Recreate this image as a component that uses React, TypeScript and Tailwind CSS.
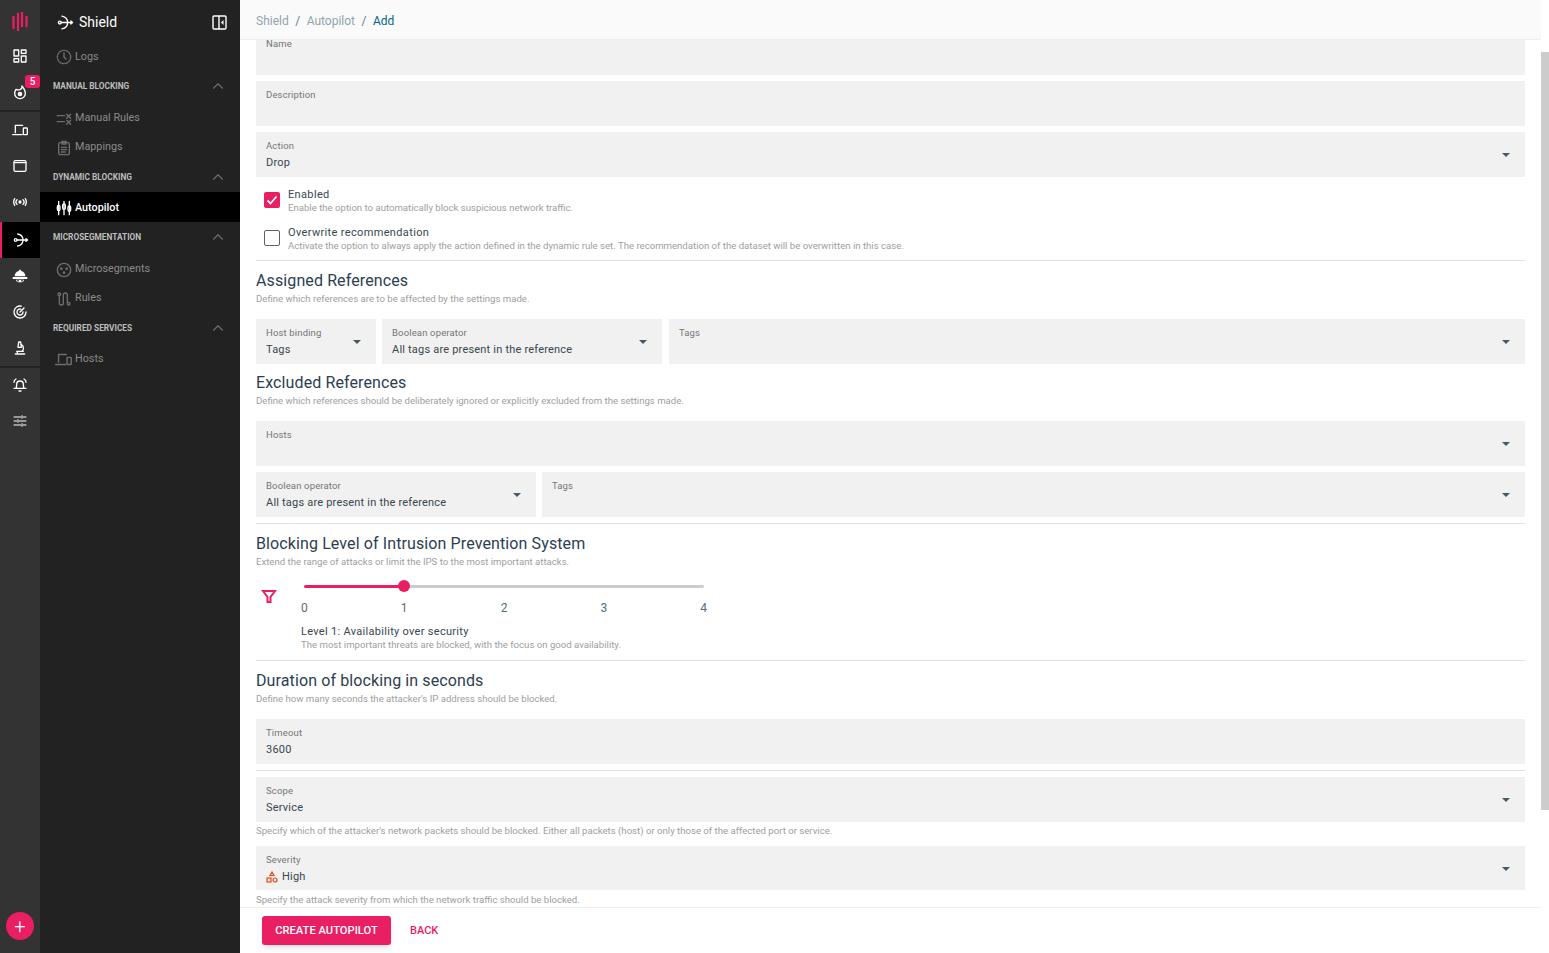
import { ChevronUp } from 'lucide-react';
import type { ReactNode } from 'react';

const Svg = ({ children, size = 16, className = '' }: { children: ReactNode; size?: number; className?: string }) => (
  <svg
    width={size}
    height={size}
    viewBox="0 0 24 24"
    fill="none"
    stroke="currentColor"
    strokeWidth="2"
    strokeLinecap="round"
    strokeLinejoin="round"
    className={className}
  >
    {children}
  </svg>
);

// Shield node: dot, curve and arrow
const ShieldIcon = ({ size = 16 }: { size?: number }) => (
  <Svg size={size}>
    <circle cx="4" cy="12" r="2" />
    <path d="M6 12h16M19.500 10l2.500 2-2.500 2" />
    <path d="M7 3c5 1 8 4.500 8 9s-3 8-8 9" />
  </Svg>
);

const HostsIcon = ({ size = 16 }: { size?: number }) => (
  <Svg size={size}>
    <path d="M16 5H5v11M1 19h14" />
    <rect x="17" y="9" width="6" height="10" rx="1" />
  </Svg>
);

const railTop = [
  <Svg key="dash"><rect x="3" y="3" width="7" height="9" /><rect x="14" y="3" width="7" height="5" /><rect x="14" y="12" width="7" height="9" /><rect x="3" y="16" width="7" height="5" /></Svg>,
  <Svg key="fire"><path d="M6 8c-1 2-2 3.500-2 6a8 8 0 0 0 16 0c0-4-2-7-5-11 0 3-1 5-3 5.500C10 9 8 9 6 8z" /><circle cx="12" cy="15" r="2.500" fill="currentColor" /></Svg>,
];

const railMiddle = [
  <HostsIcon key="hosts" />,
  <Svg key="window"><rect x="3" y="4" width="18" height="16" rx="2" /><path d="M3 7h18" /></Svg>,
  <Svg key="radio"><circle cx="12" cy="12" r="1.500" fill="currentColor" /><path d="M7.500 8.500a5 5 0 0 0 0 7M16.500 8.500a5 5 0 0 1 0 7M4 7a10 10 0 0 0 0 10M20 7a10 10 0 0 1 0 10" /></Svg>,
];

const railAfter = [
  <svg key="dome" width="16" height="16" viewBox="0 0 24 24" fill="currentColor">
    <path d="M12 2l2 2.500c4 1 6 4 6 8H4c0-4 2-7 6-8z" />
    <path d="M1 13.500h22v3H1z" />
    <path d="M6 17.500h12c0 2.500-2 4-6 4s-6-1.500-6-4z" />
    <circle cx="9" cy="19" r="1.300" fill="#333333" />
    <circle cx="15" cy="19" r="1.300" fill="#333333" />
  </svg>,
  <Svg key="radar"><path d="M14 3.200A9 9 0 1 0 21 12" /><path d="M13 7.600A4.500 4.500 0 1 0 16.500 12" /><path d="M12 12l6-6" /></Svg>,
  <Svg key="micro"><path d="M5 21h14M7 17h10M8 21v-4" /><path d="M14 7a6 6 0 0 1 1 10" /><path d="M10 3h3l1 8H9z" /></Svg>,
];

const railBottom = [
  <Svg key="alarm"><path d="M6 17c1-2 1-4 1-6a5 5 0 0 1 10 0c0 2 0 4 1 6zM3 17h18M10.500 21h3M3 8c0-2 1-4 3-5M21 8c0-2-1-4-3-5" /></Svg>,
  <Svg key="tune"><g strokeWidth="1.500"><path d="M3 6h10M17 6h4M15 4v4M3 12h4M11 12h10M9 10v4M3 18h10M17 18h4M15 16v4" /></g></Svg>,
];

const RailItem = ({ icon, active = false, badge }: { icon: ReactNode; active?: boolean; badge?: string }) => (
  <div
    className={`relative h-9 flex items-center justify-center text-white ${
      active ? 'mt-[2px] bg-black border-l-2 border-[#e91e63]' : ''
    }`}
  >
    {icon}
    {badge && (
      <span className="absolute left-[25px] top-[1px] w-[15px] h-[13px] rounded-[3px] bg-[#e91e63] text-[10px] leading-[13px] font-medium text-center">
        {badge}
      </span>
    )}
  </div>
);

const Rail = () => (
  <aside className="w-10 shrink-0 bg-[#333333] flex flex-col">
    <div className="h-[38px] pt-[6px] flex items-center justify-center">
      <svg width="16" height="20" viewBox="0 0 16 20" fill="none" stroke="#e91e63" strokeWidth="2.200">
        <path d="M1.500 4v13M6 1v18M10 0v15M14.500 4v11" />
      </svg>
    </div>
    {railTop.map((icon, i) => (
      <RailItem key={i} icon={icon} badge={i === 1 ? '5' : undefined} />
    ))}
    <div className="h-[2px] bg-[#222222]" />
    {railMiddle.map((icon, i) => (
      <RailItem key={i} icon={icon} />
    ))}
    <RailItem icon={<ShieldIcon />} active />
    {railAfter.map((icon, i) => (
      <RailItem key={i} icon={icon} />
    ))}
    <div className="h-[2px] -mb-px bg-[#222222]" />
    {railBottom.map((icon, i) => (
      <RailItem key={i} icon={icon} />
    ))}
    <div className="mt-auto mb-[13px] mx-auto w-7 h-7 rounded-full bg-[#e91e63] flex items-center justify-center text-white text-xl font-light leading-none">
      +
    </div>
  </aside>
);

const NavSection = ({ title }: { title: string }) => (
  <div className="h-[30px] pl-[13px] pr-[13px] flex items-center justify-between">
    <span className="text-[8.300px] font-bold text-[#bdbdbd]">{title}</span>
    <ChevronUp size={18} strokeWidth={1.500} className="text-[#6e6e6e]" />
  </div>
);

const NavItem = ({ icon, label, active = false, tall = false }: { icon: ReactNode; label: string; active?: boolean; tall?: boolean }) => (
  <div
    className={`pl-[17px] flex items-center gap-[5px] text-[10.800px] ${tall ? 'h-[30px] pt-[2px]' : 'h-[29px]'} ${
      active ? 'bg-black text-white font-medium' : 'text-[#8a8a8a]'
    }`}
  >
    <span className="w-[13px] h-[14px] flex items-center justify-center">{icon}</span>
    {label}
  </div>
);

const Sidebar = () => (
  <nav className="w-[200px] shrink-0 bg-[#222222] flex flex-col">
    <div className="h-[41px] pt-[3px] pl-[17px] pr-[13px] flex items-center justify-between text-white">
      <span className="flex items-center gap-[5px] text-[14px]">
        <ShieldIcon size={17} />
        Shield
      </span>
      <svg width="15" height="15" viewBox="0 0 15 15" fill="none" stroke="currentColor" strokeWidth="1.400">
        <rect x="1" y="1" width="13" height="13" rx="1" />
        <path d="M7 1v13" />
        <path d="M11.500 5v5L9 7.500z" fill="currentColor" stroke="none" />
      </svg>
    </div>
    <NavItem
      tall
      label="Logs"
      icon={<Svg size={16} className="shrink-0 text-[#6e6e6e]"><circle cx="12" cy="12" r="10" strokeDasharray="3 2" /><path d="M12 6v6l3 3" /></Svg>}
    />
    <NavSection title="MANUAL BLOCKING" />
    <div className="pt-[3px]">
      <NavItem
        label="Manual Rules"
        icon={<Svg size={16} className="shrink-0 text-[#6e6e6e]"><path d="M2 7h11M2 16h11M16 5l6 6M22 5l-6 6M16 14l6 6M22 14l-6 6" /></Svg>}
      />
      <NavItem
        label="Mappings"
        icon={<Svg size={16} className="shrink-0 text-[#6e6e6e]"><rect x="4" y="4" width="16" height="18" rx="2" /><path d="M9 2h6v4H9zM8 11h8M8 14.500h8M8 18h6" /></Svg>}
      />
    </div>
    <NavSection title="DYNAMIC BLOCKING" />
    <NavItem
      tall
      active
      label="Autopilot"
      icon={<Svg size={16} className="shrink-0"><path d="M4 2v20M12 2v20M20 2v20" /><rect x="2" y="8" width="4" height="8" rx="2" /><rect x="10" y="6" width="4" height="8" rx="2" /><rect x="18" y="9" width="4" height="8" rx="2" /></Svg>}
    />
    <NavSection title="MICROSEGMENTATION" />
    <div className="pt-[3px]">
      <NavItem
        label="Microsegments"
        icon={<Svg size={16} className="shrink-0 text-[#6e6e6e]"><circle cx="12" cy="12" r="10" /><circle cx="8" cy="10" r="1" /><circle cx="16" cy="10" r="1" /><circle cx="12" cy="16" r="1" /></Svg>}
      />
      <NavItem
        label="Rules"
        icon={<Svg size={16} className="shrink-0 text-[#6e6e6e]"><circle cx="5" cy="5" r="2" /><circle cx="19" cy="19" r="2" /><path d="M5 7v11a3 3 0 0 0 6 0V6a3 3 0 0 1 6 0v11" /></Svg>}
      />
    </div>
    <NavSection title="REQUIRED SERVICES" />
    <NavItem tall label="Hosts" icon={<span className="shrink-0 text-[#6e6e6e]"><HostsIcon size={17} /></span>} />
  </nav>
);

const Caret = () => (
  <span className="absolute right-[15px] top-[21px] w-0 h-0 border-x-[4px] border-x-transparent border-t-[4px] border-t-[#455a64]" />
);

const Field = ({
  label,
  value,
  select = false,
  className = '',
  icon,
}: {
  label: string;
  value?: string;
  select?: boolean;
  className?: string;
  icon?: ReactNode;
}) => (
  <div className={`relative px-[10px] pt-[8px] bg-[#f1f1f1] ${className}`}>
    <div className="text-[9.500px] leading-[12px] tracking-[0.15px] text-[#757575]">{label}</div>
    {value && (
      <div className="mt-[4px] flex items-center gap-[4px] text-[11px] leading-[14px] tracking-[0.2px] text-[#37474f]">
        {icon}
        {value}
      </div>
    )}
    {select && <Caret />}
  </div>
);

const Hint = ({ children, className = '' }: { children: ReactNode; className?: string }) => (
  <p className={`text-[9.600px] leading-[12px] text-[#9e9e9e] ${className}`}>{children}</p>
);

const Divider = ({ className = '' }: { className?: string }) => <hr className={`border-t border-[#e0e0e0] ${className}`} />;

const Heading = ({ title, hint }: { title: string; hint: string }) => (
  <div>
    <h2 className="text-[16px] leading-[20px] tracking-[0.11px] text-[#2c3e50]">{title}</h2>
    <Hint className="mt-[2px]">{hint}</Hint>
  </div>
);

const Check = ({ checked, title, hint }: { checked: boolean; title: string; hint: string }) => (
  <div className="flex items-start gap-2 pl-2">
    <span
      className={`mt-[4px] w-4 h-4 rounded-[2px] flex items-center justify-center shrink-0 ${
        checked ? 'bg-[#e91e63]' : 'border border-[#616161]'
      }`}
    >
      {checked && (
        <svg width="12" height="12" viewBox="0 0 12 12" fill="none" stroke="white" strokeWidth="1.800">
          <path d="M1.500 6.500l3 3 6-7" />
        </svg>
      )}
    </span>
    <div>
      <div className="text-[11px] leading-[13px] tracking-[0.35px] text-[#37474f]">{title}</div>
      <Hint className="mt-[1px]">{hint}</Hint>
    </div>
  </div>
);

const Slider = () => (
  <div className="flex pl-[5px] mt-[11px]">
    <svg width="16" height="16" viewBox="0 0 16 16" fill="none" stroke="#e91e63" strokeWidth="2" className="mt-[9px] shrink-0">
      <path d="M2 3h12L9.500 9v5h-3V9z" />
    </svg>
    <div className="ml-[24px]">
      <div className="relative ml-[3px] w-[400px] h-[14px] flex items-center">
        <div className="w-[100px] h-[3px] rounded-l bg-[#e91e63]" />
        <div className="w-[300px] h-[3px] rounded-r bg-[#cccccc]" />
        <div className="absolute left-[94px] top-[1px] w-3 h-3 rounded-full bg-[#e91e63]" />
      </div>
      <div className="mt-[8px] w-[406px] flex justify-between text-[12px] leading-[14px] text-[#546e7a]">
        {['0', '1', '2', '3', '4'].map((n) => (
          <span key={n}>{n}</span>
        ))}
      </div>
      <div className="mt-[10px] text-[11px] leading-[14px] tracking-[0.3px] text-[#37474f]">Level 1: Availability over security</div>
      <Hint>The most important threats are blocked, with the focus on good availability.</Hint>
    </div>
  </div>
);

const HighIcon = () => (
  <svg width="12" height="12" viewBox="0 0 12 12" fill="none" stroke="#e64a19" strokeWidth="1.200">
    <path d="M6 1l2 3.500H4z" />
    <rect x="1" y="7" width="4" height="4" />
    <circle cx="9" cy="9" r="2" />
  </svg>
);

const Form = () => (
  <main className="flex-1 min-h-0 px-4 bg-white">
    <div className="h-[35px] bg-[#f1f1f1] px-[10px]">
      <div className="text-[9.500px] leading-[8px] tracking-[0.15px] text-[#757575]">Name</div>
    </div>
    <Field label="Description" className="mt-[6px] h-[45px]" />
    <Field label="Action" value="Drop" select className="mt-[6px] h-[45px]" />
    <div className="mt-[11px]">
      <Check checked title="Enabled" hint="Enable the option to automatically block suspicious network traffic." />
    </div>
    <div className="mt-[12px]">
      <Check
        checked={false}
        title="Overwrite recommendation"
        hint="Activate the option to always apply the action defined in the dynamic rule set. The recommendation of the dataset will be overwritten in this case."
      />
    </div>
    <Divider className="mt-[8px]" />
    <div className="mt-[10px]">
      <Heading title="Assigned References" hint="Define which references are to be affected by the settings made." />
    </div>
    <div className="mt-[14px] flex gap-[6px]">
      <Field label="Host binding" value="Tags" select className="w-[120px] h-[45px]" />
      <Field label="Boolean operator" value="All tags are present in the reference" select className="w-[280px] h-[45px]" />
      <Field label="Tags" select className="flex-1 ml-px h-[45px]" />
    </div>
    <div className="mt-[9px]">
      <Heading
        title="Excluded References"
        hint="Define which references should be deliberately ignored or explicitly excluded from the settings made."
      />
    </div>
    <Field label="Hosts" select className="mt-[14px] h-[45px]" />
    <div className="mt-[6px] flex gap-[6px]">
      <Field label="Boolean operator" value="All tags are present in the reference" select className="w-[280px] h-[45px]" />
      <Field label="Tags" select className="flex-1 h-[45px]" />
    </div>
    <Divider className="mt-[6px]" />
    <div className="mt-[10px]">
      <Heading
        title="Blocking Level of Intrusion Prevention System"
        hint="Extend the range of attacks or limit the IPS to the most important attacks."
      />
    </div>
    <Slider />
    <Divider className="mt-[9px]" />
    <div className="mt-[10px]">
      <Heading title="Duration of blocking in seconds" hint="Define how many seconds the attacker's IP address should be blocked." />
    </div>
    <Field label="Timeout" value="3600" className="mt-[14px] h-[45px]" />
    <Divider className="mt-[6px]" />
    <Field label="Scope" value="Service" select className="mt-[6px] h-[45px]" />
    <Hint className="mt-[3px]">
      Specify which of the attacker's network packets should be blocked. Either all packets (host) or only those of the affected port or service.
    </Hint>
    <Field label="Severity" value="High" select icon={<HighIcon />} className="mt-[9px] h-[44px]" />
    <Hint className="mt-[4px]">Specify the attack severity from which the network traffic should be blocked.</Hint>
  </main>
);

export default function App() {
  return (
    <div className="h-[953px] flex overflow-hidden bg-white" style={{ fontFamily: 'Roboto, sans-serif' }}>
      <Rail />
      <Sidebar />
      <div className="flex-1 min-w-0 flex flex-col">
        <header className="h-10 shrink-0 pl-4 pt-[3px] flex items-center gap-[6.500px] bg-[#fafafa] border-b border-[#eeeeee] text-[12px] text-[#90a4ae]">
          <span>Shield</span>
          <span className="text-[#607d8b]">/</span>
          <span>Autopilot</span>
          <span className="text-[#607d8b]">/</span>
          <span className="text-[#01668b]">Add</span>
        </header>
        <Form />
        <footer className="h-[46px] shrink-0 pl-[22px] flex items-center gap-[19px] bg-white border-t border-[#eeeeee]">
          <button className="h-[29px] w-[129px] pt-px rounded-[3px] bg-[#e91e63] text-white text-[11.200px] font-medium shadow-md">CREATE AUTOPILOT</button>
          <button className="pt-[2px] text-[#e91e63] text-[11px] font-medium">BACK</button>
        </footer>
      </div>
      <div className="w-2 shrink-0 bg-white">
        <div className="mt-[52px] h-[758px] bg-[#cccccc]" />
      </div>
    </div>
  );
}
